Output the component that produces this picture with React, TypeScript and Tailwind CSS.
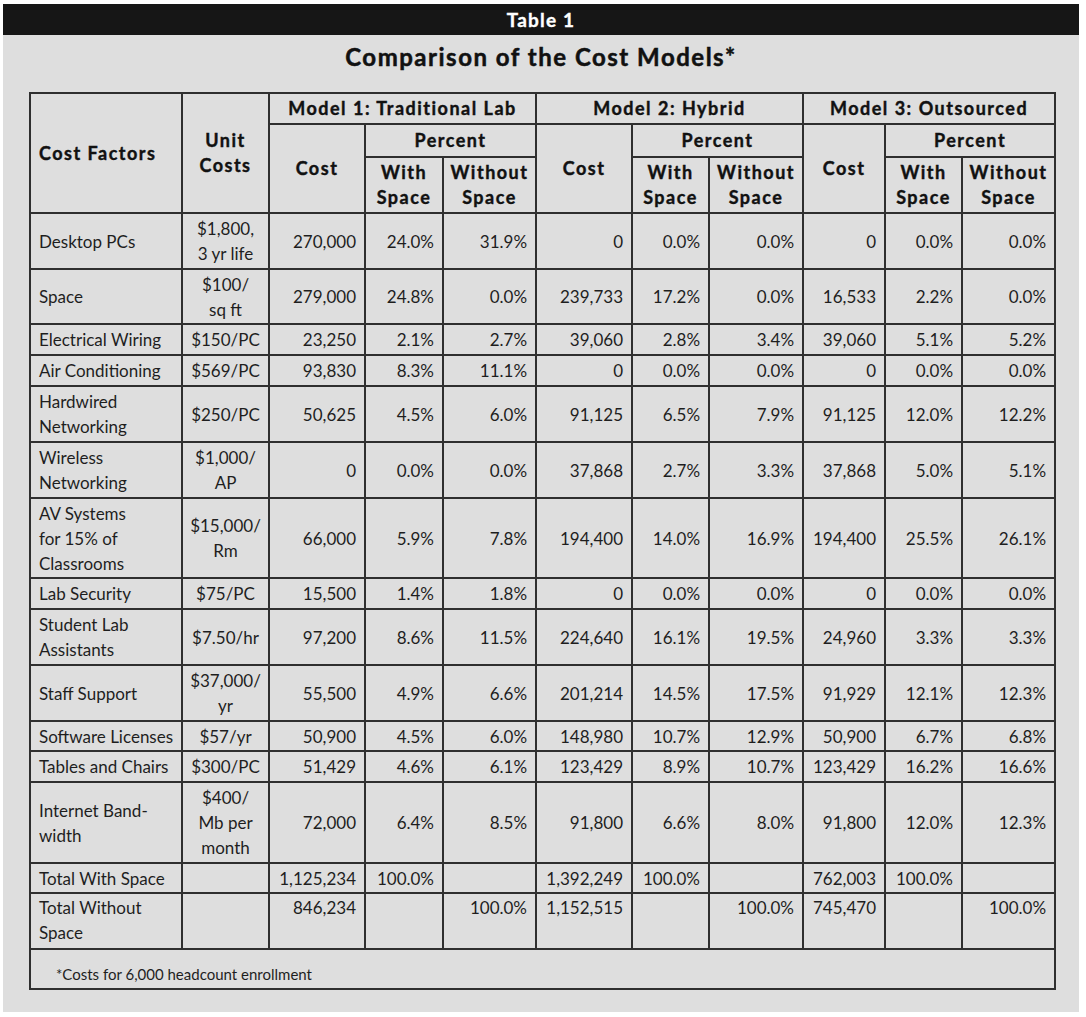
import React from "react";

type Row = { label: string[]; unit: string[]; vals: string[]; h: number; top?: boolean };

const rows: Row[] = [
  { label: ["Desktop PCs"], unit: ["$1,800,", "3 yr life"], vals: ["270,000", "24.0%", "31.9%", "0", "0.0%", "0.0%", "0", "0.0%", "0.0%"], h: 56 },
  { label: ["Space"], unit: ["$100/", "sq ft"], vals: ["279,000", "24.8%", "0.0%", "239,733", "17.2%", "0.0%", "16,533", "2.2%", "0.0%"], h: 55 },
  { label: ["Electrical Wiring"], unit: ["$150/PC"], vals: ["23,250", "2.1%", "2.7%", "39,060", "2.8%", "3.4%", "39,060", "5.1%", "5.2%"], h: 31 },
  { label: ["Air Conditioning"], unit: ["$569/PC"], vals: ["93,830", "8.3%", "11.1%", "0", "0.0%", "0.0%", "0", "0.0%", "0.0%"], h: 31 },
  { label: ["Hardwired", "Networking"], unit: ["$250/PC"], vals: ["50,625", "4.5%", "6.0%", "91,125", "6.5%", "7.9%", "91,125", "12.0%", "12.2%"], h: 56 },
  { label: ["Wireless", "Networking"], unit: ["$1,000/", "AP"], vals: ["0", "0.0%", "0.0%", "37,868", "2.7%", "3.3%", "37,868", "5.0%", "5.1%"], h: 56 },
  { label: ["AV Systems", "for 15% of", "Classrooms"], unit: ["$15,000/", "Rm"], vals: ["66,000", "5.9%", "7.8%", "194,400", "14.0%", "16.9%", "194,400", "25.5%", "26.1%"], h: 80 },
  { label: ["Lab Security"], unit: ["$75/PC"], vals: ["15,500", "1.4%", "1.8%", "0", "0.0%", "0.0%", "0", "0.0%", "0.0%"], h: 31 },
  { label: ["Student Lab", "Assistants"], unit: ["$7.50/hr"], vals: ["97,200", "8.6%", "11.5%", "224,640", "16.1%", "19.5%", "24,960", "3.3%", "3.3%"], h: 56 },
  { label: ["Staff Support"], unit: ["$37,000/", "yr"], vals: ["55,500", "4.9%", "6.6%", "201,214", "14.5%", "17.5%", "91,929", "12.1%", "12.3%"], h: 56 },
  { label: ["Software Licenses"], unit: ["$57/yr"], vals: ["50,900", "4.5%", "6.0%", "148,980", "10.7%", "12.9%", "50,900", "6.7%", "6.8%"], h: 30 },
  { label: ["Tables and Chairs"], unit: ["$300/PC"], vals: ["51,429", "4.6%", "6.1%", "123,429", "8.9%", "10.7%", "123,429", "16.2%", "16.6%"], h: 31 },
  { label: ["Internet Band-", "width"], unit: ["$400/", "Mb per", "month"], vals: ["72,000", "6.4%", "8.5%", "91,800", "6.6%", "8.0%", "91,800", "12.0%", "12.3%"], h: 81 },
  { label: ["Total With Space"], unit: [], vals: ["1,125,234", "100.0%", "", "1,392,249", "100.0%", "", "762,003", "100.0%", ""], h: 30 },
  { label: ["Total Without", "Space"], unit: [], vals: ["846,234", "", "100.0%", "1,152,515", "", "100.0%", "745,470", "", "100.0%"], h: 56, top: true },
];

const widths = [152, 87, 96, 78, 93, 96, 77, 94, 82, 77, 93];

const bd = "border-2 border-[#2f2f2f]";
const hf = "font-bold";

function Lines({ items }: { items: string[] }) {
  return (
    <>
      {items.map((t, i) => (
        <React.Fragment key={i}>
          {i > 0 && <br />}
          {t}
        </React.Fragment>
      ))}
    </>
  );
}

export default function App() {
  return (
    <div
      className="w-[1086px] h-[1017px] bg-white pt-[4px] pl-[3px]"
      style={{ fontFamily: "Lato, 'Open Sans', sans-serif" }}
    >
      <div className="w-[1076px] h-[1008px] bg-[#dedede] flex flex-col">
        <div className="h-[31px] bg-[#161616] flex items-center justify-center text-white font-bold text-[19px] leading-none tracking-[1.2px] [-webkit-text-stroke:0.35px_#ffffff]">
          Table 1
        </div>
        <div className="h-[44px] flex items-center justify-center text-[#111] font-bold text-[24px] tracking-[1.5px] [-webkit-text-stroke:0.5px_#111111]">
          Comparison of the Cost Models*
        </div>
        <div className="mt-[13px] pl-[26px]">
          <table className="table-fixed border-collapse w-[1025px] text-[#1e1e1e]">
            <colgroup>
              {widths.map((w, i) => (
                <col key={i} style={{ width: w }} />
              ))}
            </colgroup>
            <thead className="font-bold text-[18px] text-[#111] leading-[25px] tracking-[1.5px] [-webkit-text-stroke:0.4px_#111111]">
              <tr className="h-[31px]">
                <th rowSpan={3} className={`${bd} text-left pl-[8px] align-middle ${hf}`}>
                  Cost Factors
                </th>
                <th rowSpan={3} className={`${bd} text-center align-middle ${hf}`}>
                  Unit
                  <br />
                  Costs
                </th>
                <th colSpan={3} className={`${bd} text-center ${hf}`}>Model 1: Traditional Lab</th>
                <th colSpan={3} className={`${bd} text-center ${hf}`}>Model 2: Hybrid</th>
                <th colSpan={3} className={`${bd} text-center ${hf}`}>Model 3: Outsourced</th>
              </tr>
              <tr className="h-[33px]">
                {[0, 1, 2].map((m) => (
                  <React.Fragment key={m}>
                    <th rowSpan={2} className={`${bd} text-center align-middle ${hf}`}>Cost</th>
                    <th colSpan={2} className={`${bd} text-center ${hf}`}>Percent</th>
                  </React.Fragment>
                ))}
              </tr>
              <tr className="h-[56px]">
                {[0, 1, 2].map((m) => (
                  <React.Fragment key={m}>
                    <th className={`${bd} text-center ${hf}`}>
                      With
                      <br />
                      Space
                    </th>
                    <th className={`${bd} text-center ${hf}`}>
                      Without
                      <br />
                      Space
                    </th>
                  </React.Fragment>
                ))}
              </tr>
            </thead>
            <tbody className="text-[17px] leading-[25px]">
              {rows.map((r, ri) => (
                <tr key={ri} style={{ height: r.h }}>
                  <td className={`${bd} pl-[8px] pr-[4px] ${r.top ? "align-top pt-[1px]" : "align-middle"}`}>
                    <Lines items={r.label} />
                  </td>
                  <td className={`${bd} text-center ${r.top ? "align-top" : "align-middle"}`}>
                    <Lines items={r.unit} />
                  </td>
                  {r.vals.map((v, vi) => (
                    <td
                      key={vi}
                      className={`${bd} text-right pr-[8px] whitespace-nowrap ${r.top ? "align-top pt-[1px]" : "align-middle"}`}
                    >
                      {v}
                    </td>
                  ))}
                </tr>
              ))}
              <tr className="h-[40px]">
                <td colSpan={11} className={`${bd} align-bottom pl-[25px] pb-[4px] text-[15px] leading-[20px]`}>
                  *Costs for 6,000 headcount enrollment
                </td>
              </tr>
            </tbody>
          </table>
        </div>
      </div>
    </div>
  );
}
